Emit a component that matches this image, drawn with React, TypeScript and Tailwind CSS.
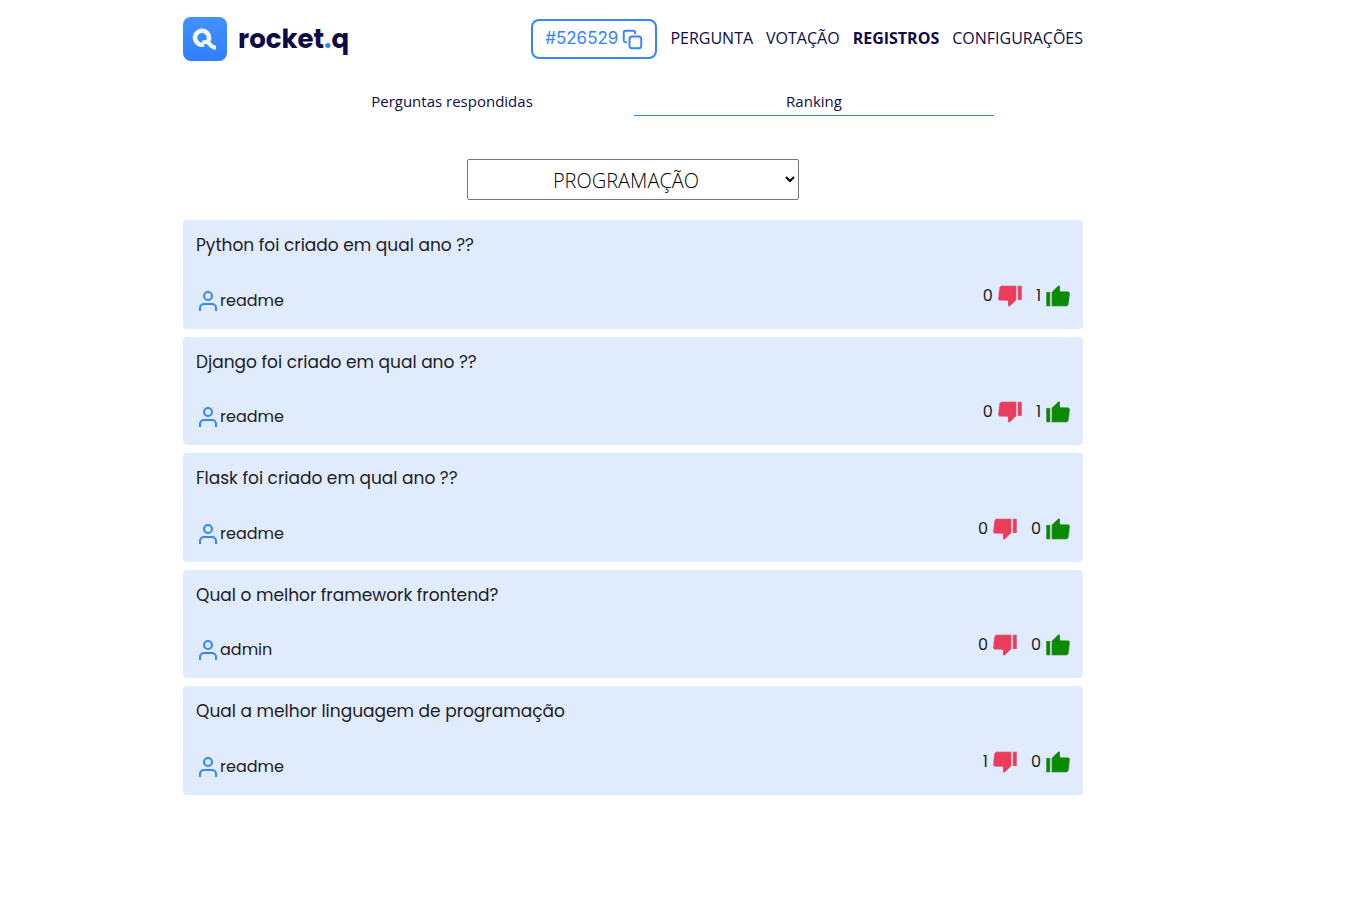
import { useState } from "react";

type Question = { text: string; author: string; down: number; up: number };

const questions: Question[] = [
  { text: "Python foi criado em qual ano ??", author: "readme", down: 0, up: 1 },
  { text: "Django foi criado em qual ano ??", author: "readme", down: 0, up: 1 },
  { text: "Flask foi criado em qual ano ??", author: "readme", down: 0, up: 0 },
  { text: "Qual o melhor framework frontend?", author: "admin", down: 0, up: 0 },
  { text: "Qual a melhor linguagem de programação", author: "readme", down: 1, up: 0 },
];

const links = [
  { label: "PERGUNTA", active: false },
  { label: "VOTAÇÃO", active: false },
  { label: "REGISTROS", active: true },
  { label: "CONFIGURAÇÕES", active: false },
];

function LogoMark() {
  return (
    <svg className="size-11" viewBox="0 0 44 44" aria-hidden="true">
      <defs>
        <linearGradient id="mark" x1="0" y1="0" x2="0" y2="1">
          <stop offset="0" stopColor="#4291ff" />
          <stop offset="1" stopColor="#2f7fff" />
        </linearGradient>
      </defs>
      <rect width="44" height="44" rx="8" fill="url(#mark)" />
      <g fill="none" stroke="#f3f6fc" strokeWidth="4.6">
        <path d="M21 27.4 A7 7 0 1 1 26 20.5 L25.8 24.5" />
        <path d="M19.6 25.4 C22.5 24.6 25 25 26.6 27 C28.4 29.4 29.6 30.6 33 30.7" strokeWidth="4" />
      </g>
    </svg>
  );
}

function CopyIcon() {
  return (
    <svg className="size-[21px]" viewBox="0 0 24 24" fill="none" stroke="currentColor" strokeWidth="2.2" strokeLinecap="round" strokeLinejoin="round" aria-hidden="true">
      <rect x="8.6" y="8.6" width="13.4" height="13.4" rx="3" />
      <path d="M5 15H4a2 2 0 0 1-2-2V4a2 2 0 0 1 2-2h9a2 2 0 0 1 2 2v1" />
    </svg>
  );
}

function UserIcon() {
  return (
    <svg className="size-6" viewBox="0 0 24 24" fill="none" stroke="#3485ff" strokeWidth="2" aria-hidden="true">
      <circle cx="12" cy="7" r="4" />
      <path d="M4 22v-3a4 4 0 0 1 4-4h8a4 4 0 0 1 4 4v3" />
    </svg>
  );
}

function Thumb({ down = false }: { down?: boolean }) {
  return (
    <svg
      className={down ? "size-6 rotate-180" : "size-6"}
      viewBox="0 0 24 24"
      fill={down ? "#eb3d5b" : "#0a8a00"}
      stroke="#b9c0cb"
      strokeWidth="0.3"
      aria-hidden="true"
    >
      <path d="M0.2 8h4v14.2h-4z" />
      <path d="M5.7 8L12.4 1.6 14 2V7.3L22.6 7.5 23.9 9 22.5 20.7 20.9 22.2H5.7z" />
    </svg>
  );
}

export default function App() {
  const [tab, setTab] = useState("Ranking");
  return (
    <div className="min-h-screen bg-white pr-[93px] font-['Open_Sans',sans-serif] text-[#0d0c47]">
      <div className="mx-auto max-w-[900px] pt-4">
        <header className="flex h-[46px] items-center justify-between">
          <a href="#" className="flex items-center gap-[11px]">
            <LogoMark />
            <span className="font-['Poppins',sans-serif] text-[26px] leading-8 font-bold">
              rocket<span className="text-[#3485ff]">.</span>q
            </span>
          </a>
          <nav className="flex items-center gap-[13px] text-base">
            <button className="flex h-10 items-center gap-1 rounded-lg border-2 border-[#3485ff] px-3 font-['Inter',sans-serif] text-[17px] text-[#3485ff]">
              #526529
              <CopyIcon />
            </button>
            {links.map((l) => (
              <a key={l.label} href="#" className={l.active ? "pb-0.5 font-bold" : "pb-0.5"}>
                {l.label}
              </a>
            ))}
          </nav>
        </header>

        <div className="mx-auto mt-[26px] grid max-w-[722px] grid-cols-2 gap-0.5">
          {["Perguntas respondidas", "Ranking"].map((t) => (
            <button
              key={t}
              onClick={() => setTab(t)}
              className={
                tab === t
                  ? "h-7 border-b border-[#3485ff] text-[15px]"
                  : "h-7 border-b border-transparent text-[15px]"
              }
            >
              {t}
            </button>
          ))}
        </div>

        <div className="mt-[43px] flex justify-center">
          <select
            aria-label="Categoria"
            className="h-[41px] w-[332px] rounded-xs border border-[#767676] bg-white pt-0.5 pr-0.5 text-center text-xl font-light text-black"
          >
            <option>PROGRAMAÇÃO</option>
          </select>
        </div>

        <main className="mt-5 grid min-h-[575px] auto-rows-fr gap-2 font-['Poppins',sans-serif] text-[#202024]">
          {questions.map((q) => (
            <article key={q.text} className="flex flex-col justify-between rounded bg-[#e0ebfe] px-[13px] pt-[13px] pb-4">
              <h2 className="text-[17px] leading-6">{q.text}</h2>
              <div className="flex items-start justify-between text-base leading-6">
                <div className="flex items-center">
                  <UserIcon />
                  {q.author}
                </div>
                <div className="-mt-[5px] flex gap-[14px]">
                  <span className="flex items-center gap-[5px]">
                    {q.down}
                    <Thumb down />
                  </span>
                  <span className="flex items-center gap-[5px]">
                    {q.up}
                    <Thumb />
                  </span>
                </div>
              </div>
            </article>
          ))}
        </main>
      </div>
    </div>
  );
}
